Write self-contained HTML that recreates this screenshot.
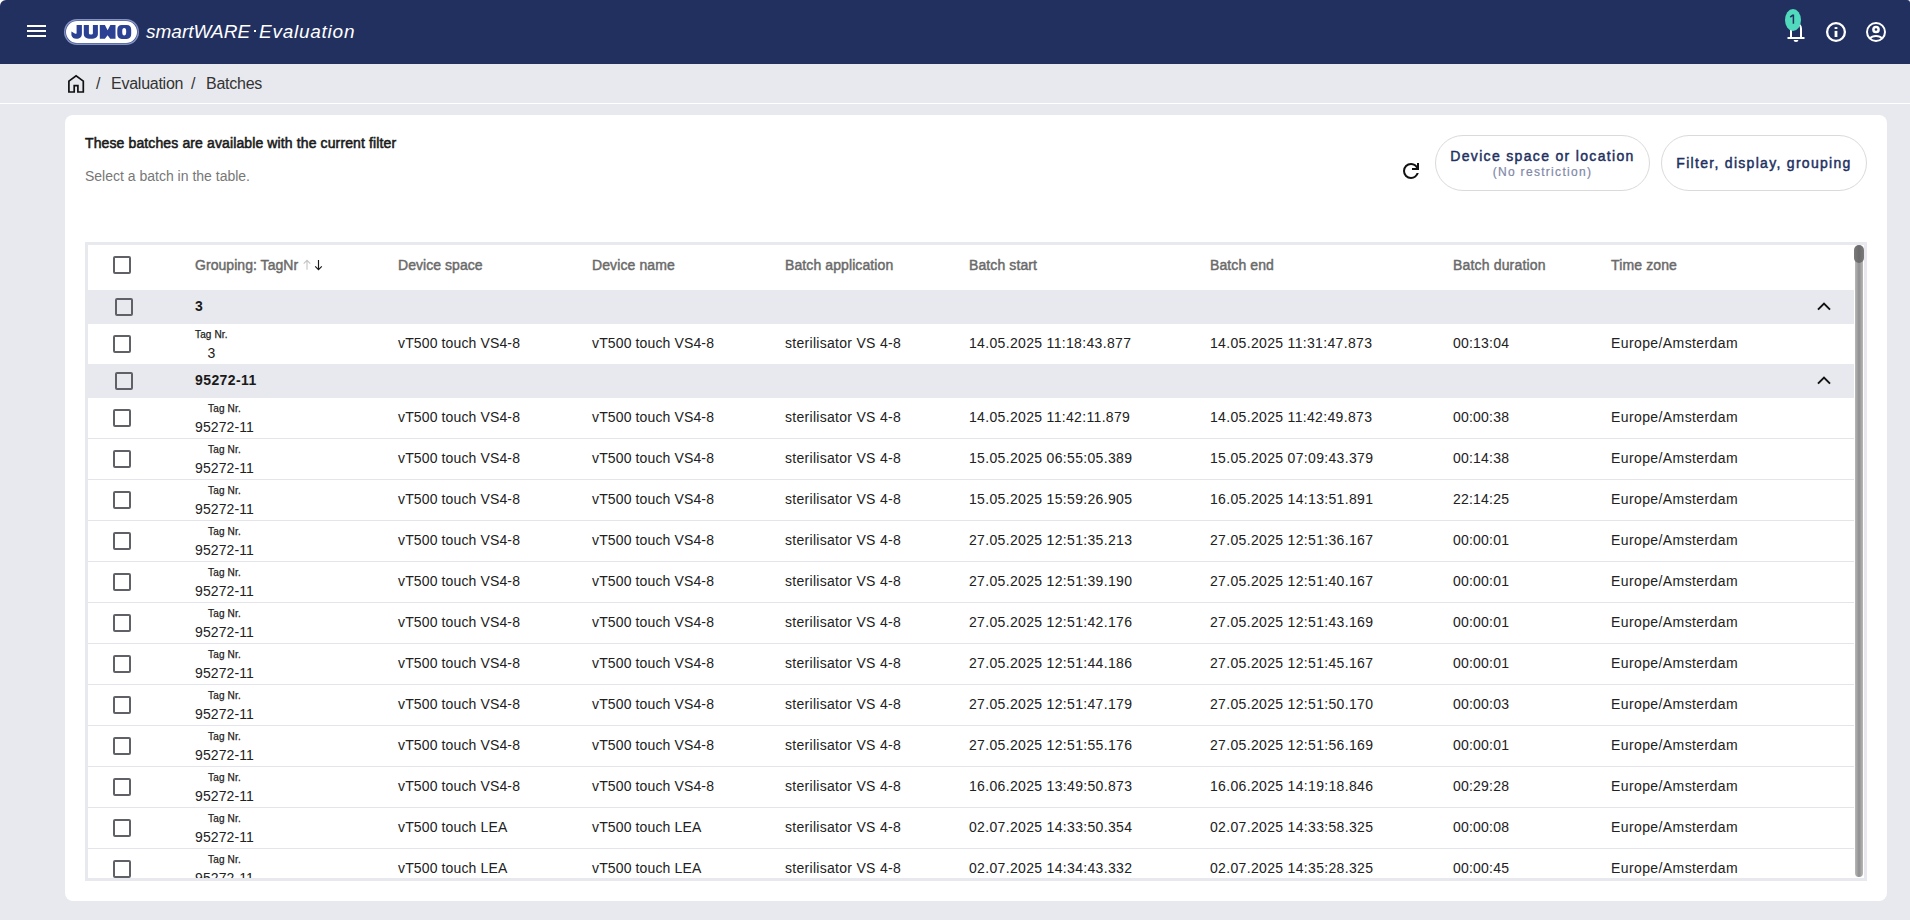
<!DOCTYPE html>
<html><head><meta charset="utf-8">
<style>
*{box-sizing:border-box;margin:0;padding:0}
html,body{width:1910px;height:920px;overflow:hidden;background:#e8e9ee;font-family:"Liberation Sans",sans-serif;color:#212121}
.abs{position:absolute}
.bc{position:absolute;top:12px;font-size:16px;line-height:16px;color:#333;white-space:nowrap;letter-spacing:-0.25px}
#nav{position:absolute;left:0;top:0;width:1910px;height:64px;background:#22305f;border-top-left-radius:6px;border-top-right-radius:3px}
#wc{position:absolute;left:0;top:0;width:1910px;height:10px;background:#fff}
#crumb{position:absolute;left:0;top:64px;width:1910px;height:40px;background:#e8e9ee;border-bottom:1px solid #fff}
#card{position:absolute;left:65px;top:115px;width:1822px;height:786px;background:#fff;border-radius:8px}
#tbl{position:absolute;left:85px;top:242px;width:1782px;height:639px;border:3px solid #e8e9ee;overflow:hidden;background:#fff}
#tbl .in{position:absolute;left:0;top:0;width:1776px;height:633px}
.cb{position:absolute;width:18px;height:18px;border:2px solid #5f6167;border-radius:2px}
.h,.d,.g{position:absolute;font-size:14px;line-height:14px;white-space:nowrap}
.h{font-weight:normal;color:#6a6a6a;letter-spacing:0.1px;-webkit-text-stroke:0.45px #6a6a6a}
.d{color:#212121;letter-spacing:0.2px}
.g{font-weight:bold;color:#1a1a1a;letter-spacing:0.41px}
.grp{position:absolute;left:0;width:1766px;height:34px;background:#e8e9ee}
.sep{position:absolute;left:0;width:1766px;height:1px;background:#e4e5ea}
.arr,.chev{position:absolute}
.tag{position:absolute;text-align:center;white-space:nowrap}
.tl{font-size:10px;line-height:10px;height:10px;color:#222;letter-spacing:0.15px;margin-top:3px;-webkit-text-stroke:0.25px #222}
.tv{font-size:14px;line-height:14px;color:#212121;letter-spacing:0.1px;margin-top:6px}
#sb{position:absolute;left:1766px;top:0;width:10px;height:633px}
#sbt{position:absolute;left:1px;top:4px;width:8px;height:628px;border-radius:4px;background:linear-gradient(90deg,#b8b8b8,#8f8f8f 50%,#b8b8b8)}
#sbh{position:absolute;left:0;top:0;width:10px;height:18px;border-radius:5px;background:linear-gradient(90deg,#7a7a7a,#6a6a6a 50%,#7a7a7a)}
.btn{position:absolute;top:135px;height:56px;border:1px solid #dadada;border-radius:28px;text-align:center;color:#2b3a6b}
.bt{font-size:14px;font-weight:normal;letter-spacing:1.33px;white-space:nowrap;color:#22305f;-webkit-text-stroke:0.45px #22305f}
.bs{font-size:12px;letter-spacing:1.3px;color:#7f88a6;white-space:nowrap;-webkit-text-stroke:0.2px #7f88a6;margin-top:1px}
</style></head><body>
<div id="wc"></div>
<div id="nav">
  <svg class="abs" style="left:27px;top:25px" width="19" height="13" viewBox="0 0 19 13"><path d="M0 1H19M0 6H19M0 11H19" stroke="#fff" stroke-width="2"/></svg>
  <div class="abs" style="left:64px;top:19px;width:75px;height:26px;border-radius:13px;background:#8592c4"></div>
  <div class="abs" style="left:65.6px;top:20.7px;width:71.8px;height:22.6px;border-radius:11.3px;background:#fff;box-shadow:0 0 0 0.6px #3b4c8c"></div>
  <svg class="abs" style="left:64px;top:18px" width="76" height="28" viewBox="64 18 76 28"><g fill="#2b4194" fill-rule="evenodd">
    <path d="M76.6 25.1H81.9V33.5C81.9 37.2 79.8 38.8 76.4 38.8C73.8 38.8 72.2 37.5 71.4 35.2V31.5L74.8 33.5C75.7 34.1 76.6 33.8 76.6 32.9Z"/>
    <path d="M83.8 25.1H88.9V33.2C88.9 34 89.6 34.5 90.9 34.5C92.2 34.5 92.9 34 92.9 33.2V25.1H97.9V33.8C97.9 37.3 95.8 38.8 90.9 38.8C86 38.8 83.8 37.3 83.8 33.8Z"/>
    <path d="M99.8 38.8V25.1H104.9L107.6 30.3L110.4 25.1H115.5V38.8H110.2L107.6 35.2L104.9 38.8Z"/>
    <path d="M121.8 25.1H126.7C129.7 25.1 131.2 27 131.2 30V34C131.2 37 129.7 38.9 126.7 38.9H121.8C118.8 38.9 117.3 37 117.3 34V30C117.3 27 118.8 25.1 121.8 25.1ZM124.2 28.1C123 28.1 122.2 28.9 122.2 31.7C122.2 34.6 123 35.4 124.2 35.4C125.4 35.4 126.2 34.6 126.2 31.7C126.2 28.9 125.4 28.1 124.2 28.1Z"/>
  </g></svg>
  <div class="abs" style="left:146px;top:22px;font-size:19px;line-height:20px;font-style:italic;color:#fff;white-space:nowrap">smartWARE</div>
  <div class="abs" style="left:253.5px;top:30px;width:2px;height:2px;background:#fff"></div>
  <div class="abs" style="left:259px;top:22px;font-size:19px;line-height:20px;font-style:italic;color:#fff;white-space:nowrap;letter-spacing:0.75px">Evaluation</div>
  <svg class="abs" style="left:1786px;top:20px" width="20" height="24" viewBox="0 0 20 24">
    <path d="M5 17V8.5a5 5 0 0 1 10 0V17M1.5 18H18.5" fill="none" stroke="#fff" stroke-width="2"/>
    <path d="M7.6 20H12.4A2.4 2.1 0 0 1 7.6 20Z" fill="#fff"/>
  </svg>
  <div class="abs" style="left:1785px;top:9px;width:16px;height:22px;border-radius:50%;background:#50d9bd"></div>
  <svg class="abs" style="left:1785px;top:9px" width="16" height="22" viewBox="0 0 16 22"><path d="M5.2 8.2L7.6 6.3H8.4V14.8" fill="none" stroke="#22305f" stroke-width="1.5"/></svg>
  <svg class="abs" style="left:1824px;top:20px" width="24" height="24" viewBox="0 0 24 24">
    <circle cx="12" cy="12" r="8.9" fill="none" stroke="#fff" stroke-width="2.3"/>
    <path d="M12 10.9V17" stroke="#fff" stroke-width="2.8"/><path d="M12 7.1V9" stroke="#fff" stroke-width="2.8"/>
  </svg>
  <svg class="abs" style="left:1864px;top:20px" width="24" height="24" viewBox="0 0 24 24">
    <circle cx="12" cy="12" r="9" fill="none" stroke="#fff" stroke-width="2"/>
    <circle cx="12" cy="9.5" r="2.6" fill="none" stroke="#fff" stroke-width="2.5"/>
    <path d="M5.5 18.9C7.3 16.9 9.6 16.1 12 16.1S16.7 16.9 18.5 18.9" fill="none" stroke="#fff" stroke-width="2"/>
  </svg>
</div>
<div id="crumb">
  <svg class="abs" style="left:67px;top:10px" width="18" height="19" viewBox="0 0 18 19">
    <path d="M1.9 18V7.1L9.1 1.9L16.3 7.1V18H10.9V11.6H7.2V18Z" fill="none" stroke="#111" stroke-width="1.7" stroke-linejoin="miter"/>
  </svg>
  <div class="bc" style="left:96px">/</div>
  <div class="bc" style="left:111px">Evaluation</div>
  <div class="bc" style="left:191px">/</div>
  <div class="bc" style="left:206px">Batches</div>
</div>
<div id="card"></div>
<div class="abs" style="left:85px;top:136px;font-size:14px;line-height:14px;font-weight:normal;color:#1a1a1a;letter-spacing:0.12px;-webkit-text-stroke:0.55px #1a1a1a;white-space:nowrap">These batches are available with the current filter</div>
<div class="abs" style="left:85px;top:169px;font-size:14px;line-height:14px;color:#777;white-space:nowrap">Select a batch in the table.</div>
<svg class="abs" style="left:1399px;top:159px" width="24" height="24" viewBox="0 -960 960 960"><path d="M480-160q-134 0-227-93t-93-227q0-134 93-227t227-93q69 0 132 28.5T720-690v-110h80v280H520v-80h168q-32-56-87.5-88T480-720q-100 0-170 70t-70 170q0 100 70 170t170 70q77 0 139-44t87-116h84q-28 106-114 173t-196 67Z" fill="#111"/></svg>
<div class="btn" style="left:1435px;width:215px;padding-top:12px">
  <div class="bt" style="line-height:16px">Device space or location</div>
  <div class="bs" style="line-height:14px">(No restriction)</div>
</div>
<div class="btn" style="left:1661px;width:206px;padding-top:19px">
  <div class="bt" style="line-height:16px;letter-spacing:1.3px">Filter, display, grouping</div>
</div>
<div id="tbl"><div class="in">
<div class="cb" style="left:25px;top:11px"></div>
<div class="h" style="left:107px;top:13px;letter-spacing:0.05px">Grouping: TagNr</div>
<svg class="arr" style="left:215px;top:14px" width="8" height="12" viewBox="0 0 8 12"><path d="M4 10.8V1.3M0.7 4.6L4 1.3L7.3 4.6" fill="none" stroke="#c4c4c4" stroke-width="1.1"/></svg>
<svg class="arr" style="left:226px;top:14px" width="9" height="12" viewBox="0 0 9 12"><path d="M4.5 1V10.6M1.2 7.3L4.5 10.6L7.8 7.3" fill="none" stroke="#1a1a1a" stroke-width="1.15"/></svg>
<div class="h" style="left:310px;top:13px;letter-spacing:0.05px">Device space</div>
<div class="h" style="left:504px;top:13px;letter-spacing:0.1px">Device name</div>
<div class="h" style="left:697px;top:13px;letter-spacing:0.1px">Batch application</div>
<div class="h" style="left:881px;top:13px;letter-spacing:0.1px">Batch start</div>
<div class="h" style="left:1122px;top:13px;letter-spacing:0.1px">Batch end</div>
<div class="h" style="left:1365px;top:13px;letter-spacing:0.17px">Batch duration</div>
<div class="h" style="left:1523px;top:13px;letter-spacing:0.13px">Time zone</div>
<div class="grp" style="top:45px"></div>
<div class="cb" style="left:27px;top:53px"></div>
<div class="g" style="left:107px;top:53.5px">3</div>
<svg class="chev" style="left:1728px;top:56px" width="16" height="10" viewBox="0 0 16 10"><path d="M2 8.6L8 2.6L14 8.6" fill="none" stroke="#111" stroke-width="2"/></svg>
<div class="cb" style="left:25px;top:90px"></div>
<div class="tag" style="left:107px;top:82px"><div class="tl">Tag Nr.</div><div class="tv">3</div></div>
<div class="d" style="left:310px;top:91px;letter-spacing:0.13px">vT500 touch VS4-8</div>
<div class="d" style="left:504px;top:91px;letter-spacing:0.13px">vT500 touch VS4-8</div>
<div class="d" style="left:697px;top:91px;letter-spacing:0.29px">sterilisator VS 4-8</div>
<div class="d" style="left:881px;top:91px;letter-spacing:0.33px">14.05.2025 11:18:43.877</div>
<div class="d" style="left:1122px;top:91px;letter-spacing:0.33px">14.05.2025 11:31:47.873</div>
<div class="d" style="left:1365px;top:91px;letter-spacing:0.21px">00:13:04</div>
<div class="d" style="left:1523px;top:91px;letter-spacing:0.4px">Europe/Amsterdam</div>
<div class="grp" style="top:119px"></div>
<div class="cb" style="left:27px;top:127px"></div>
<div class="g" style="left:107px;top:127.5px">95272-11</div>
<svg class="chev" style="left:1728px;top:130px" width="16" height="10" viewBox="0 0 16 10"><path d="M2 8.6L8 2.6L14 8.6" fill="none" stroke="#111" stroke-width="2"/></svg>
<div class="sep" style="top:193px"></div>
<div class="cb" style="left:25px;top:164px"></div>
<div class="tag" style="left:107px;top:156px"><div class="tl">Tag Nr.</div><div class="tv">95272-11</div></div>
<div class="d" style="left:310px;top:165px;letter-spacing:0.13px">vT500 touch VS4-8</div>
<div class="d" style="left:504px;top:165px;letter-spacing:0.13px">vT500 touch VS4-8</div>
<div class="d" style="left:697px;top:165px;letter-spacing:0.29px">sterilisator VS 4-8</div>
<div class="d" style="left:881px;top:165px;letter-spacing:0.33px">14.05.2025 11:42:11.879</div>
<div class="d" style="left:1122px;top:165px;letter-spacing:0.33px">14.05.2025 11:42:49.873</div>
<div class="d" style="left:1365px;top:165px;letter-spacing:0.21px">00:00:38</div>
<div class="d" style="left:1523px;top:165px;letter-spacing:0.4px">Europe/Amsterdam</div>
<div class="sep" style="top:234px"></div>
<div class="cb" style="left:25px;top:205px"></div>
<div class="tag" style="left:107px;top:197px"><div class="tl">Tag Nr.</div><div class="tv">95272-11</div></div>
<div class="d" style="left:310px;top:206px;letter-spacing:0.13px">vT500 touch VS4-8</div>
<div class="d" style="left:504px;top:206px;letter-spacing:0.13px">vT500 touch VS4-8</div>
<div class="d" style="left:697px;top:206px;letter-spacing:0.29px">sterilisator VS 4-8</div>
<div class="d" style="left:881px;top:206px;letter-spacing:0.33px">15.05.2025 06:55:05.389</div>
<div class="d" style="left:1122px;top:206px;letter-spacing:0.33px">15.05.2025 07:09:43.379</div>
<div class="d" style="left:1365px;top:206px;letter-spacing:0.21px">00:14:38</div>
<div class="d" style="left:1523px;top:206px;letter-spacing:0.4px">Europe/Amsterdam</div>
<div class="sep" style="top:275px"></div>
<div class="cb" style="left:25px;top:246px"></div>
<div class="tag" style="left:107px;top:238px"><div class="tl">Tag Nr.</div><div class="tv">95272-11</div></div>
<div class="d" style="left:310px;top:247px;letter-spacing:0.13px">vT500 touch VS4-8</div>
<div class="d" style="left:504px;top:247px;letter-spacing:0.13px">vT500 touch VS4-8</div>
<div class="d" style="left:697px;top:247px;letter-spacing:0.29px">sterilisator VS 4-8</div>
<div class="d" style="left:881px;top:247px;letter-spacing:0.33px">15.05.2025 15:59:26.905</div>
<div class="d" style="left:1122px;top:247px;letter-spacing:0.33px">16.05.2025 14:13:51.891</div>
<div class="d" style="left:1365px;top:247px;letter-spacing:0.21px">22:14:25</div>
<div class="d" style="left:1523px;top:247px;letter-spacing:0.4px">Europe/Amsterdam</div>
<div class="sep" style="top:316px"></div>
<div class="cb" style="left:25px;top:287px"></div>
<div class="tag" style="left:107px;top:279px"><div class="tl">Tag Nr.</div><div class="tv">95272-11</div></div>
<div class="d" style="left:310px;top:288px;letter-spacing:0.13px">vT500 touch VS4-8</div>
<div class="d" style="left:504px;top:288px;letter-spacing:0.13px">vT500 touch VS4-8</div>
<div class="d" style="left:697px;top:288px;letter-spacing:0.29px">sterilisator VS 4-8</div>
<div class="d" style="left:881px;top:288px;letter-spacing:0.33px">27.05.2025 12:51:35.213</div>
<div class="d" style="left:1122px;top:288px;letter-spacing:0.33px">27.05.2025 12:51:36.167</div>
<div class="d" style="left:1365px;top:288px;letter-spacing:0.21px">00:00:01</div>
<div class="d" style="left:1523px;top:288px;letter-spacing:0.4px">Europe/Amsterdam</div>
<div class="sep" style="top:357px"></div>
<div class="cb" style="left:25px;top:328px"></div>
<div class="tag" style="left:107px;top:320px"><div class="tl">Tag Nr.</div><div class="tv">95272-11</div></div>
<div class="d" style="left:310px;top:329px;letter-spacing:0.13px">vT500 touch VS4-8</div>
<div class="d" style="left:504px;top:329px;letter-spacing:0.13px">vT500 touch VS4-8</div>
<div class="d" style="left:697px;top:329px;letter-spacing:0.29px">sterilisator VS 4-8</div>
<div class="d" style="left:881px;top:329px;letter-spacing:0.33px">27.05.2025 12:51:39.190</div>
<div class="d" style="left:1122px;top:329px;letter-spacing:0.33px">27.05.2025 12:51:40.167</div>
<div class="d" style="left:1365px;top:329px;letter-spacing:0.21px">00:00:01</div>
<div class="d" style="left:1523px;top:329px;letter-spacing:0.4px">Europe/Amsterdam</div>
<div class="sep" style="top:398px"></div>
<div class="cb" style="left:25px;top:369px"></div>
<div class="tag" style="left:107px;top:361px"><div class="tl">Tag Nr.</div><div class="tv">95272-11</div></div>
<div class="d" style="left:310px;top:370px;letter-spacing:0.13px">vT500 touch VS4-8</div>
<div class="d" style="left:504px;top:370px;letter-spacing:0.13px">vT500 touch VS4-8</div>
<div class="d" style="left:697px;top:370px;letter-spacing:0.29px">sterilisator VS 4-8</div>
<div class="d" style="left:881px;top:370px;letter-spacing:0.33px">27.05.2025 12:51:42.176</div>
<div class="d" style="left:1122px;top:370px;letter-spacing:0.33px">27.05.2025 12:51:43.169</div>
<div class="d" style="left:1365px;top:370px;letter-spacing:0.21px">00:00:01</div>
<div class="d" style="left:1523px;top:370px;letter-spacing:0.4px">Europe/Amsterdam</div>
<div class="sep" style="top:439px"></div>
<div class="cb" style="left:25px;top:410px"></div>
<div class="tag" style="left:107px;top:402px"><div class="tl">Tag Nr.</div><div class="tv">95272-11</div></div>
<div class="d" style="left:310px;top:411px;letter-spacing:0.13px">vT500 touch VS4-8</div>
<div class="d" style="left:504px;top:411px;letter-spacing:0.13px">vT500 touch VS4-8</div>
<div class="d" style="left:697px;top:411px;letter-spacing:0.29px">sterilisator VS 4-8</div>
<div class="d" style="left:881px;top:411px;letter-spacing:0.33px">27.05.2025 12:51:44.186</div>
<div class="d" style="left:1122px;top:411px;letter-spacing:0.33px">27.05.2025 12:51:45.167</div>
<div class="d" style="left:1365px;top:411px;letter-spacing:0.21px">00:00:01</div>
<div class="d" style="left:1523px;top:411px;letter-spacing:0.4px">Europe/Amsterdam</div>
<div class="sep" style="top:480px"></div>
<div class="cb" style="left:25px;top:451px"></div>
<div class="tag" style="left:107px;top:443px"><div class="tl">Tag Nr.</div><div class="tv">95272-11</div></div>
<div class="d" style="left:310px;top:452px;letter-spacing:0.13px">vT500 touch VS4-8</div>
<div class="d" style="left:504px;top:452px;letter-spacing:0.13px">vT500 touch VS4-8</div>
<div class="d" style="left:697px;top:452px;letter-spacing:0.29px">sterilisator VS 4-8</div>
<div class="d" style="left:881px;top:452px;letter-spacing:0.33px">27.05.2025 12:51:47.179</div>
<div class="d" style="left:1122px;top:452px;letter-spacing:0.33px">27.05.2025 12:51:50.170</div>
<div class="d" style="left:1365px;top:452px;letter-spacing:0.21px">00:00:03</div>
<div class="d" style="left:1523px;top:452px;letter-spacing:0.4px">Europe/Amsterdam</div>
<div class="sep" style="top:521px"></div>
<div class="cb" style="left:25px;top:492px"></div>
<div class="tag" style="left:107px;top:484px"><div class="tl">Tag Nr.</div><div class="tv">95272-11</div></div>
<div class="d" style="left:310px;top:493px;letter-spacing:0.13px">vT500 touch VS4-8</div>
<div class="d" style="left:504px;top:493px;letter-spacing:0.13px">vT500 touch VS4-8</div>
<div class="d" style="left:697px;top:493px;letter-spacing:0.29px">sterilisator VS 4-8</div>
<div class="d" style="left:881px;top:493px;letter-spacing:0.33px">27.05.2025 12:51:55.176</div>
<div class="d" style="left:1122px;top:493px;letter-spacing:0.33px">27.05.2025 12:51:56.169</div>
<div class="d" style="left:1365px;top:493px;letter-spacing:0.21px">00:00:01</div>
<div class="d" style="left:1523px;top:493px;letter-spacing:0.4px">Europe/Amsterdam</div>
<div class="sep" style="top:562px"></div>
<div class="cb" style="left:25px;top:533px"></div>
<div class="tag" style="left:107px;top:525px"><div class="tl">Tag Nr.</div><div class="tv">95272-11</div></div>
<div class="d" style="left:310px;top:534px;letter-spacing:0.13px">vT500 touch VS4-8</div>
<div class="d" style="left:504px;top:534px;letter-spacing:0.13px">vT500 touch VS4-8</div>
<div class="d" style="left:697px;top:534px;letter-spacing:0.29px">sterilisator VS 4-8</div>
<div class="d" style="left:881px;top:534px;letter-spacing:0.33px">16.06.2025 13:49:50.873</div>
<div class="d" style="left:1122px;top:534px;letter-spacing:0.33px">16.06.2025 14:19:18.846</div>
<div class="d" style="left:1365px;top:534px;letter-spacing:0.21px">00:29:28</div>
<div class="d" style="left:1523px;top:534px;letter-spacing:0.4px">Europe/Amsterdam</div>
<div class="sep" style="top:603px"></div>
<div class="cb" style="left:25px;top:574px"></div>
<div class="tag" style="left:107px;top:566px"><div class="tl">Tag Nr.</div><div class="tv">95272-11</div></div>
<div class="d" style="left:310px;top:575px;letter-spacing:0.13px">vT500 touch LEA</div>
<div class="d" style="left:504px;top:575px;letter-spacing:0.13px">vT500 touch LEA</div>
<div class="d" style="left:697px;top:575px;letter-spacing:0.29px">sterilisator VS 4-8</div>
<div class="d" style="left:881px;top:575px;letter-spacing:0.33px">02.07.2025 14:33:50.354</div>
<div class="d" style="left:1122px;top:575px;letter-spacing:0.33px">02.07.2025 14:33:58.325</div>
<div class="d" style="left:1365px;top:575px;letter-spacing:0.21px">00:00:08</div>
<div class="d" style="left:1523px;top:575px;letter-spacing:0.4px">Europe/Amsterdam</div>
<div class="sep" style="top:644px"></div>
<div class="cb" style="left:25px;top:615px"></div>
<div class="tag" style="left:107px;top:607px"><div class="tl">Tag Nr.</div><div class="tv">95272-11</div></div>
<div class="d" style="left:310px;top:616px;letter-spacing:0.13px">vT500 touch LEA</div>
<div class="d" style="left:504px;top:616px;letter-spacing:0.13px">vT500 touch LEA</div>
<div class="d" style="left:697px;top:616px;letter-spacing:0.29px">sterilisator VS 4-8</div>
<div class="d" style="left:881px;top:616px;letter-spacing:0.33px">02.07.2025 14:34:43.332</div>
<div class="d" style="left:1122px;top:616px;letter-spacing:0.33px">02.07.2025 14:35:28.325</div>
<div class="d" style="left:1365px;top:616px;letter-spacing:0.21px">00:00:45</div>
<div class="d" style="left:1523px;top:616px;letter-spacing:0.4px">Europe/Amsterdam</div>
<div id="sb"><div id="sbt"></div><div id="sbh"></div></div>
</div></div>
</body></html>
